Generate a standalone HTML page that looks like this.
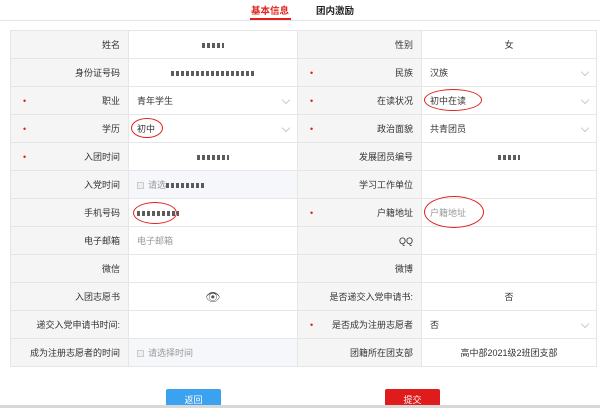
<!DOCTYPE html>
<html><head><meta charset="utf-8"><style>
*{margin:0;padding:0;box-sizing:border-box}
body{width:600px;height:408px;overflow:hidden;background:#fff;font-family:"Liberation Sans","Noto Sans CJK SC",sans-serif;font-size:9px;color:#333;position:relative}
.hdr{position:absolute;left:0;top:0;width:600px;height:21px;border-bottom:1px solid #e3e6ee}
.t1{position:absolute;left:251px;top:3px;color:#e0201c;font-weight:bold;font-size:9.5px}
.ul{position:absolute;left:250px;top:18px;width:41px;height:2px;background:#e0201c}
.t2{position:absolute;left:316px;top:3px;color:#222;font-weight:bold;font-size:9.5px}
table{position:absolute;left:10px;top:30px;border-collapse:collapse;table-layout:fixed;width:586px}
td{height:28px;border:1px solid #e6e6e6;padding:0 8px;position:relative;white-space:nowrap}
td.l{background:#f5f5f5;text-align:right;width:118px}
td.l2{width:124px}
td.v{background:#fff}
td.c{text-align:center}
.d{position:absolute;left:12px;top:9px;color:#e0201c;font-size:9px}
.ph{color:#999}
.ar{position:absolute;right:8px;top:10px;width:6px;height:6px;border-right:1px solid #ccc;border-bottom:1px solid #ccc;transform:rotate(45deg)}
.gray{background:#f6f7fa!important}
.cb{display:inline-block;width:7px;height:7px;border:1px solid #ccc;vertical-align:-1px;margin-right:4px;background:#eee}
.blur{display:inline-block;height:5px;background:repeating-linear-gradient(90deg,#333 0 3px,transparent 3px 5px);opacity:.8;vertical-align:middle}
.circ{position:absolute;border:1.5px solid #e0201c;border-radius:50%}
.btn{position:absolute;top:389px;height:19px;color:#fff;text-align:center;line-height:22px;font-size:9px;border-radius:2px 2px 0 0}
.bot{position:absolute;left:0;top:405px;width:600px;height:3px;background:#d8d8d8}
</style></head><body>
<div class="hdr"></div>
<div class="t1">基本信息</div><div class="ul"></div>
<div class="t2">团内激励</div>
<table>
<colgroup><col style="width:118px"><col style="width:169px"><col style="width:124px"><col style="width:175px"></colgroup>
<tr><td class="l">姓名</td><td class="c"><span class="blur" style="width:22px"></span></td><td class="l">性别</td><td class="c">女</td></tr>
<tr><td class="l">身份证号码</td><td class="c"><span class="blur" style="width:85px"></span></td><td class="l"><span class="d">•</span>民族</td><td>汉族<span class="ar"></span></td></tr>
<tr><td class="l"><span class="d">•</span>职业</td><td>青年学生<span class="ar"></span></td><td class="l"><span class="d">•</span>在读状况</td><td>初中在读<span class="ar"></span><span class="circ" style="left:2px;top:2px;width:58px;height:22px"></span></td></tr>
<tr><td class="l"><span class="d">•</span>学历</td><td>初中<span class="ar"></span><span class="circ" style="left:2px;top:3px;width:32px;height:20px"></span></td><td class="l"><span class="d">•</span>政治面貌</td><td>共青团员<span class="ar"></span></td></tr>
<tr><td class="l"><span class="d">•</span>入团时间</td><td class="c"><span class="blur" style="width:32px"></span></td><td class="l">发展团员编号</td><td class="c"><span class="blur" style="width:22px"></span></td></tr>
<tr><td class="l">入党时间</td><td class="gray ph"><span class="cb"></span>请选<span class="blur" style="width:40px"></span></td><td class="l">学习工作单位</td><td></td></tr>
<tr><td class="l">手机号码</td><td><span class="blur" style="width:42px"></span><span class="circ" style="left:4px;top:3px;width:44px;height:22px"></span></td><td class="l"><span class="d">•</span>户籍地址</td><td class="ph">户籍地址<span class="circ" style="left:2px;top:-3px;width:60px;height:32px"></span></td></tr>
<tr><td class="l">电子邮箱</td><td class="ph">电子邮箱</td><td class="l">QQ</td><td></td></tr>
<tr><td class="l">微信</td><td></td><td class="l">微博</td><td></td></tr>
<tr><td class="l">入团志愿书</td><td class="c" style="font-size:12px;color:#555">👁</td><td class="l">是否递交入党申请书:</td><td class="c">否</td></tr>
<tr><td class="l">递交入党申请书时间:</td><td></td><td class="l"><span class="d">•</span>是否成为注册志愿者</td><td>否<span class="ar"></span></td></tr>
<tr><td class="l">成为注册志愿者的时间</td><td class="gray ph"><span class="cb"></span>请选择时间</td><td class="l">团籍所在团支部</td><td class="c">高中部2021级2班团支部</td></tr>
</table>
<div class="btn" style="left:166px;width:55px;background:#3ba2f0">返回</div>
<div class="btn" style="left:385px;width:55px;background:#e01b1b">提交</div>
<div class="bot"></div>
</body></html>
